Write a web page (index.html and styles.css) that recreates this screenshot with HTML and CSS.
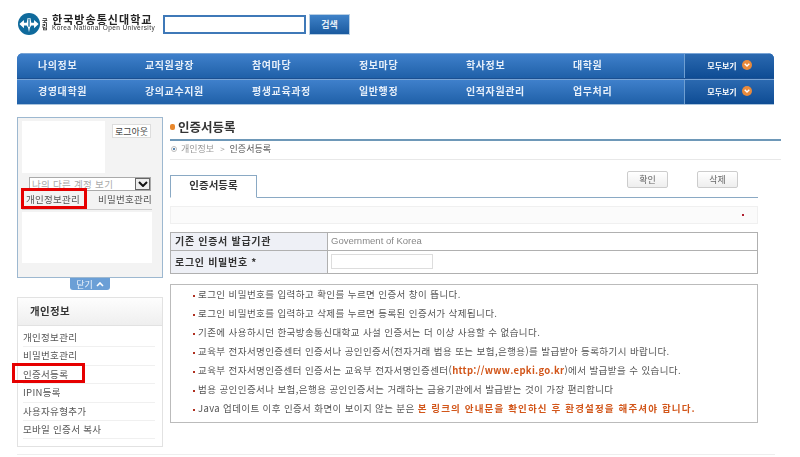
FILE: index.html
```html
<!DOCTYPE html>
<html lang="ko">
<head>
<meta charset="utf-8">
<title>인증서등록</title>
<link rel="stylesheet" href="styles.css">
</head>
<body>
<div class="page">
  <header class="top">
    <div class="logo">
      <svg class="logo-mark" viewBox="0 0 24 24" width="22" height="22">
        <circle cx="12" cy="12" r="12" fill="#0f6a9c"/>
        <path d="M1.5 12 L6.5 7.5 V10.5 H9.5 L10.5 5.5 H13.5 L14.5 10.5 H17.5 V7.5 L22.5 12 L17.5 16.5 V13.5 H14.5 L13 16 L12 21 L11 16 L9.5 13.5 H6.5 V16.5 Z" fill="#fff"/>
        <path d="M12 6 V15" stroke="#0f6a9c" stroke-width="1.4"/>
      </svg>
      <span class="logo-small">국립</span>
      <div class="logo-text">
        <span class="logo-ko">한국방송통신대학교</span>
        <span class="logo-en">Korea National Open University</span>
      </div>
    </div>
    <input class="search-input" type="text">
    <button class="search-btn" type="button">검색</button>
  </header>

  <nav class="gnb">
    <div class="gnb-row">
      <ul class="gnb-items">
        <li>나의정보</li><li>교직원광장</li><li>참여마당</li><li>정보마당</li><li>학사정보</li><li>대학원</li>
      </ul>
      <div class="gnb-all">모두보기<svg class="chev" viewBox="0 0 10 10" width="10" height="10"><circle cx="5" cy="5" r="5" fill="#e88a3c"/><path d="M2.7 3.8 L5 6.1 L7.3 3.8" fill="none" stroke="#fff" stroke-width="1.4"/></svg></div>
    </div>
    <div class="gnb-row">
      <ul class="gnb-items">
        <li>경영대학원</li><li>강의교수지원</li><li>평생교육과정</li><li>일반행정</li><li>인적자원관리</li><li>업무처리</li>
      </ul>
      <div class="gnb-all">모두보기<svg class="chev" viewBox="0 0 10 10" width="10" height="10"><circle cx="5" cy="5" r="5" fill="#e88a3c"/><path d="M2.7 3.8 L5 6.1 L7.3 3.8" fill="none" stroke="#fff" stroke-width="1.4"/></svg></div>
    </div>
  </nav>

  <div class="content">
    <aside class="side">
      <section class="user-box">
        <div class="user-top">
          <div class="user-photo"></div>
          <button class="logout" type="button">로그아웃</button>
        </div>
        <div class="account-select"><span>나의 다른 계정 보기</span><i class="select-arrow"><svg viewBox="0 0 10 6" width="10" height="6"><path d="M1 1 L5 5 L9 1" fill="none" stroke="#111" stroke-width="2"/></svg></i></div>
        <div class="user-tabs">
          <span class="user-tab marked">개인정보관리</span>
          <span class="user-tab">비밀번호관리</span>
        </div>
        <div class="user-panel"></div>
      </section>
      <div class="close-wrap"><span class="close-tab">닫기<svg viewBox="0 0 8 5" width="8" height="5"><path d="M1 4 L4 1 L7 4" fill="none" stroke="#fff" stroke-width="1.6"/></svg></span></div>
      <section class="menu">
        <h2 class="menu-title">개인정보</h2>
        <ul class="menu-list">
          <li>개인정보관리</li>
          <li>비밀번호관리</li>
          <li class="marked-item">인증서등록</li>
          <li>IPIN등록</li>
          <li>사용자유형추가</li>
          <li>모바일 인증서 복사</li>
        </ul>
      </section>
    </aside>

    <main class="main">
      <h1 class="title"><i class="title-dot"></i>인증서등록</h1>
      <div class="crumb"><i class="crumb-dot"></i><span>개인정보</span><span class="crumb-sep">&gt;</span><b>인증서등록</b></div>
      <div class="inner">
        <div class="tab-row">
          <div class="tab">인증서등록</div>
          <div class="actions">
            <button class="act" type="button">확인</button>
            <button class="act" type="button">삭제</button>
          </div>
        </div>
        <div class="bar"><i class="bar-dot"></i></div>
        <table class="form">
          <tr><th>기존 인증서 발급기관</th><td class="gov">Government of Korea</td></tr>
          <tr><th>로그인 비밀번호 *</th><td><input class="pw" type="text"></td></tr>
        </table>
        <ul class="notes">
          <li>로그인 비밀번호를 입력하고 확인를 누르면 인증서 창이 뜹니다.</li>
          <li>로그인 비밀번호를 입력하고 삭제를 누르면 등록된 인증서가 삭제됩니다.</li>
          <li>기존에 사용하시던 한국방송통신대학교 사설 인증서는 더 이상 사용할 수 없습니다.</li>
          <li>교육부 전자서명인증센터 인증서나 공인인증서(전자거래 범용 또는 보험,은행용)를 발급받아 등록하기시 바랍니다.</li>
          <li>교육부 전자서명인증센터 인증서는 교육부 전자서명인증센터(<b class="hot">http://www.epki.go.kr</b>)에서 발급받을 수 있습니다.</li>
          <li>범용 공인인증서나 보험,은행용 공인인증서는 거래하는 금융기관에서 발급받는 것이 가장 편리합니다</li>
          <li class="tight">Java 업데이트 이후 인증서 화면이 보이지 않는 분은 <b class="hot wide">본 링크의 안내문을 확인하신 후 환경설정을 해주셔야 합니다.</b></li>
        </ul>
      </div>
    </main>
  </div>
  <div class="foot"></div>
</div>
</body>
</html>
```

FILE: styles.css
```css
*, *::before, *::after { box-sizing: border-box; }
html, body { margin: 0; padding: 0; background: #fff; }
body { font-family: "Noto Sans CJK KR", "Noto Sans", sans-serif; color: #444; font-size: 10px; overflow: hidden; }
ul { list-style: none; margin: 0; padding: 0; }
i { display: block; }
button { font-family: inherit; padding: 0; }
.page { width: 800px; height: 457px; padding-top: 12px; filter: blur(0.3px); }

.top { display: flex; align-items: center; height: 24px; margin-left: 18px; }
.logo { display: flex; align-items: center; width: 145px; }
.logo-mark { flex: none; margin-right: 2px; }
.logo-small { flex: none; width: 8px; font-size: 6px; line-height: 6.5px; font-weight: 700; color: #222; }
.logo-text { display: flex; flex-direction: column; margin-left: 2px; padding-bottom: 3px; }
.logo-ko { font-size: 11px; line-height: 11px; font-weight: 700; color: #222; white-space: nowrap; letter-spacing: 1.05px; }
.logo-en { font-family: "Liberation Sans", sans-serif; font-size: 6.5px; line-height: 6px; color: #333; white-space: nowrap; letter-spacing: 0.4px; }
.search-input { width: 143px; height: 19px; border: 2px solid #3f79b8; background: #fff; }
.search-btn { width: 41px; height: 21px; margin-left: 3px; border: 1px solid #b8cfe4; background: linear-gradient(#3f82c8, #1a5a9f); color: #e8f0f8; font-size: 9px; font-weight: 700; }

.gnb { width: 757px; height: 52px; margin: 17px 0 0 17px; background: #2b6db5; border-radius: 6px 6px 0 0; overflow: hidden; border-bottom: 1px solid #a9c3dc; }
.gnb-row { display: flex; height: 26px; background: linear-gradient(#3f80cb, #1f60a8); border-bottom: 1px solid #1b4f90; border-top: 1px solid #7aa5d6; }
.gnb-items { display: flex; flex: 1; padding-left: 21px; }
.gnb-items li { width: 107px; color: #e8f0fa; font-size: 10px; font-weight: 700; line-height: 21px; letter-spacing: 0.6px; white-space: nowrap; }
.gnb-all { display: flex; align-items: center; justify-content: center; gap: 5px; width: 90px; border-left: 1px solid #6f9fd2; background: linear-gradient(#2b69b0, #0e4c94); color: #fff; font-size: 8px; font-weight: 700; padding-bottom: 2px; }
.chev { flex: none; }

.content { display: flex; margin: 12px 0 0 17px; }
.side { width: 146px; flex: none; }
.user-box { height: 161px; border: 1px solid #9db8d0; background: #f3f3f3; padding: 3px 10px 0 4px; }
.user-top { display: flex; justify-content: space-between; height: 56px; padding-right: 1px; }
.user-photo { width: 83px; height: 52px; background: #fff; }
.logout { width: 39px; height: 14px; margin-top: 3px; border: 1px solid #ddd; background: #fff; color: #444; font-size: 9px; line-height: 11px; }
.account-select { display: flex; justify-content: space-between; height: 14px; margin: 0 1px 0 7px; border: 1px solid #aaa; background: #fff; color: #aaa; font-size: 9.5px; line-height: 12px; padding-left: 2px; letter-spacing: 0.3px; }
.select-arrow { display: flex; align-items: center; justify-content: center; width: 15px; background: #eee; border-left: 1px solid #555; outline: 1px solid #666; outline-offset: -1px; }
.user-tabs { display: flex; justify-content: space-between; height: 19px; border-bottom: 1px solid #ccc; padding: 0 0 0 4px; }
.user-tab { font-size: 9.5px; line-height: 17px; color: #555; letter-spacing: 0.25px; }
.marked { position: relative; }
.marked::after { content: ""; position: absolute; left: -5px; top: -3px; width: 66px; height: 21px; border: 3px solid #e60000; }
.user-panel { height: 51px; margin-top: 2px; background: #fff; }
.close-wrap { display: flex; justify-content: center; height: 19px; }
.close-tab { display: flex; align-items: center; justify-content: center; gap: 3px; width: 40px; height: 12px; background: #6b9fd6; border-radius: 0 0 3px 3px; color: #eef4fb; font-size: 9px; }

.menu { height: 150px; border: 1px solid #e2e2e2; }
.menu-title { margin: 0; height: 28px; background: linear-gradient(#fdfdfd, #efefef); border-bottom: 1px solid #e2e2e2; font-size: 10.5px; font-weight: 700; line-height: 26px; padding-left: 12px; color: #333; letter-spacing: 0.3px; }
.menu-list { padding: 3px 7px 0 5px; }
.menu-list li { position: relative; height: 18.4px; line-height: 17px; font-size: 9.5px; color: #555; border-bottom: 1px solid #f0f0f0; letter-spacing: 0.3px; }
.marked-item::after { content: ""; position: absolute; left: -11px; top: -3px; width: 73px; height: 20px; border: 3px solid #e60000; }

.main { margin-left: 7px; width: 611px; }
.title { display: flex; align-items: center; margin: 0; height: 24px; border-bottom: 2px solid #6e98b8; font-size: 12.5px; font-weight: 700; color: #333; padding-bottom: 3px; }
.title-dot { width: 5px; height: 6px; margin-right: 3px; background: #e8872c; border-radius: 2px; }
.crumb { display: flex; align-items: center; height: 19px; border-bottom: 1px solid #e8e8e8; font-size: 9px; color: #999; padding-bottom: 3px; }
.crumb-dot { width: 6px; height: 6px; margin: 0 4px 0 1px; border-radius: 50%; border: 1px solid #bbb; background: radial-gradient(#5a86b0 35%, #fff 40%); }
.crumb-sep { margin: 0 5px 0 6px; font-size: 8px; }
.crumb b { font-weight: 400; color: #555; }

.inner { width: 588px; }
.tab-row { display: flex; justify-content: space-between; height: 38px; border-bottom: 1px solid #8aa9c4; }
.tab { align-self: flex-end; width: 87px; height: 23px; margin-bottom: -1px; background: #fff; border: 1px solid #8aa9c4; border-bottom: 1px solid #fff; text-align: center; font-size: 10.5px; font-weight: 700; line-height: 18px; color: #333; }
.actions { display: flex; gap: 29px; padding: 11px 20px 0 0; }
.act { width: 41px; height: 17px; border: 1px solid #ccc; border-radius: 2px; background: linear-gradient(#fff, #eee); color: #666; font-size: 9px; }
.bar { position: relative; height: 18px; margin-top: 8px; background: #fbfbfb; border: 1px solid #f0f0f0; }
.bar-dot { position: absolute; right: 13px; top: 7px; width: 2px; height: 2px; background: #b02030; }

.form { width: 100%; height: 42px; margin-top: 8px; border-collapse: collapse; border: 1px solid #b0b0b0; }
.form th, .form td { border: 1px solid #b0b0b0; padding: 0 0 0 4px; text-align: left; font-size: 10px; line-height: 12px; }
.form tr:first-child { height: 18px; }
.form th { width: 157px; background: #eef0f6; color: #333; font-weight: 700; letter-spacing: 0.7px; padding-bottom: 1px; }
.form td { padding-left: 3px; }
.form .gov { color: #888; font-family: "Liberation Sans", sans-serif; font-size: 9.5px; padding-bottom: 2px; }
.pw { display: block; width: 102px; height: 15px; margin-bottom: 2px; border: 1px solid #ddd; }

.notes { height: 139px; margin-top: 10px; padding: 0 0 0 21px; border: 1px solid #bbb; background: #fff; }
.notes li { position: relative; height: 19px; line-height: 19px; padding-left: 6px; font-size: 9.5px; color: #555; letter-spacing: 0.42px; white-space: nowrap; }
.notes li::before { content: ""; position: absolute; left: 1px; top: 10px; width: 2px; height: 2px; background: #b03020; }
.notes .tight { letter-spacing: 0.38px; }
.hot { color: #d2561a; font-weight: 700; letter-spacing: 0.3px; }
.wide { letter-spacing: 1.15px; }

.foot { height: 1px; margin: 7px 25px 0 17px; background: #eee; }
```
